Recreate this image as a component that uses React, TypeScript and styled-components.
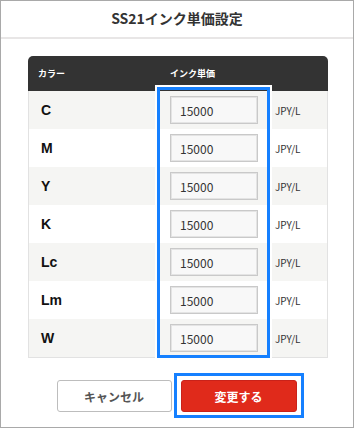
import React from "react";
import styled, { createGlobalStyle } from "styled-components";

const GlobalStyle = createGlobalStyle`
  html, body {
    margin: 0;
    padding: 0;
    background: #ffffff;
  }
  * {
    box-sizing: border-box;
  }
`;

const JP = `"Noto Sans CJK JP", "Noto Sans", sans-serif`;

const Frame = styled.div`
  width: 354px;
  height: 428px;
  border: 1px solid #a9a9a9;
  background: #fff;
  font-family: ${JP};
  color: #333;
`;

const Title = styled.h1`
  margin: 0;
  height: 38px;
  line-height: 35px;
  text-align: center;
  font-size: 14px;
  font-weight: 700;
  color: #333;
  border-bottom: 2px solid #e8e6e6;
`;

const TableWrap = styled.div`
  position: relative;
  width: 300px;
  margin: 17px 0 0 27px;
`;

const Grid = `
  display: grid;
  grid-template-columns: 129px 113px 58px;
  align-items: center;
`;

const HeaderRow = styled.div`
  ${Grid}
  height: 35px;
  background: #333333;
  border-radius: 5px 5px 0 0;
  color: #fff;
  font-size: 9px;
  font-weight: 700;
`;

const HeadCell = styled.div<{ $pad: number }>`
  padding-left: ${(p) => p.$pad}px;
`;

const Body = styled.div`
  border: 1px solid #e2e2e2;
  border-top: none;
`;

const Row = styled.div<{ $shade: boolean }>`
  ${Grid}
  height: 38px;
  background: ${(p) => (p.$shade ? "#f5f5f3" : "#ffffff")};
`;

const ColorName = styled.div`
  padding-left: 12px;
  font-family: "Liberation Sans", Arial, sans-serif;
  font-weight: 700;
  font-size: 14px;
  color: #111;
`;

const PriceCell = styled.div`
  padding-left: 12px;
`;

const PriceInput = styled.input`
  width: 88px;
  height: 28px;
  border: 1px solid #c9c9c9;
  box-shadow: inset 0 0 0 1px #e4e4e4;
  background: #f8f8f8;
  padding: 0 0 0 9px;
  font-family: ${JP};
  font-size: 12px;
  color: #333;
  outline: none;
`;

const Unit = styled.div`
  padding-left: 4px;
  font-size: 10px;
  color: #333;
`;

const ColumnHighlight = styled.div`
  position: absolute;
  left: 129px;
  top: 31px;
  width: 113px;
  height: 271px;
  border: 3px solid #1580ff;
  box-shadow: 0 0 0 2px #ffffff;
  pointer-events: none;
`;

const Actions = styled.div`
  display: flex;
  justify-content: center;
  gap: 9px;
  margin-top: 22px;
  padding-right: 1px;
`;

const Button = styled.button<{ $primary?: boolean }>`
  position: relative;
  width: ${(p) => (p.$primary ? 116 : 115)}px;
  height: 32px;
  border-radius: 3px;
  border: 1px solid ${(p) => (p.$primary ? "#c9221a" : "#bdbdbd")};
  background: ${(p) => (p.$primary ? "#e02a1b" : "#ffffff")};
  color: ${(p) => (p.$primary ? "#ffffff" : "#555555")};
  font-family: ${JP};
  font-size: 12px;
  font-weight: 700;
  cursor: pointer;

  ${(p) =>
    p.$primary &&
    `
    &::after {
      content: "";
      position: absolute;
      inset: -8px -8px -7px -8px;
      border: 3px solid #1580ff;
      pointer-events: none;
    }
  `}
`;

const colors = ["C", "M", "Y", "K", "Lc", "Lm", "W"];

export default function App() {
  return (
    <>
      <GlobalStyle />
      <Frame>
        <Title>SS21インク単価設定</Title>
        <TableWrap>
          <HeaderRow>
            <HeadCell $pad={10}>カラー</HeadCell>
            <HeadCell $pad={13}>インク単価</HeadCell>
            <div />
          </HeaderRow>
          <Body>
            {colors.map((c, i) => (
              <Row key={c} $shade={i % 2 === 0}>
                <ColorName>{c}</ColorName>
                <PriceCell>
                  <PriceInput defaultValue="15000" />
                </PriceCell>
                <Unit>JPY/L</Unit>
              </Row>
            ))}
          </Body>
          <ColumnHighlight />
        </TableWrap>
        <Actions>
          <Button>キャンセル</Button>
          <Button $primary>変更する</Button>
        </Actions>
      </Frame>
    </>
  );
}
